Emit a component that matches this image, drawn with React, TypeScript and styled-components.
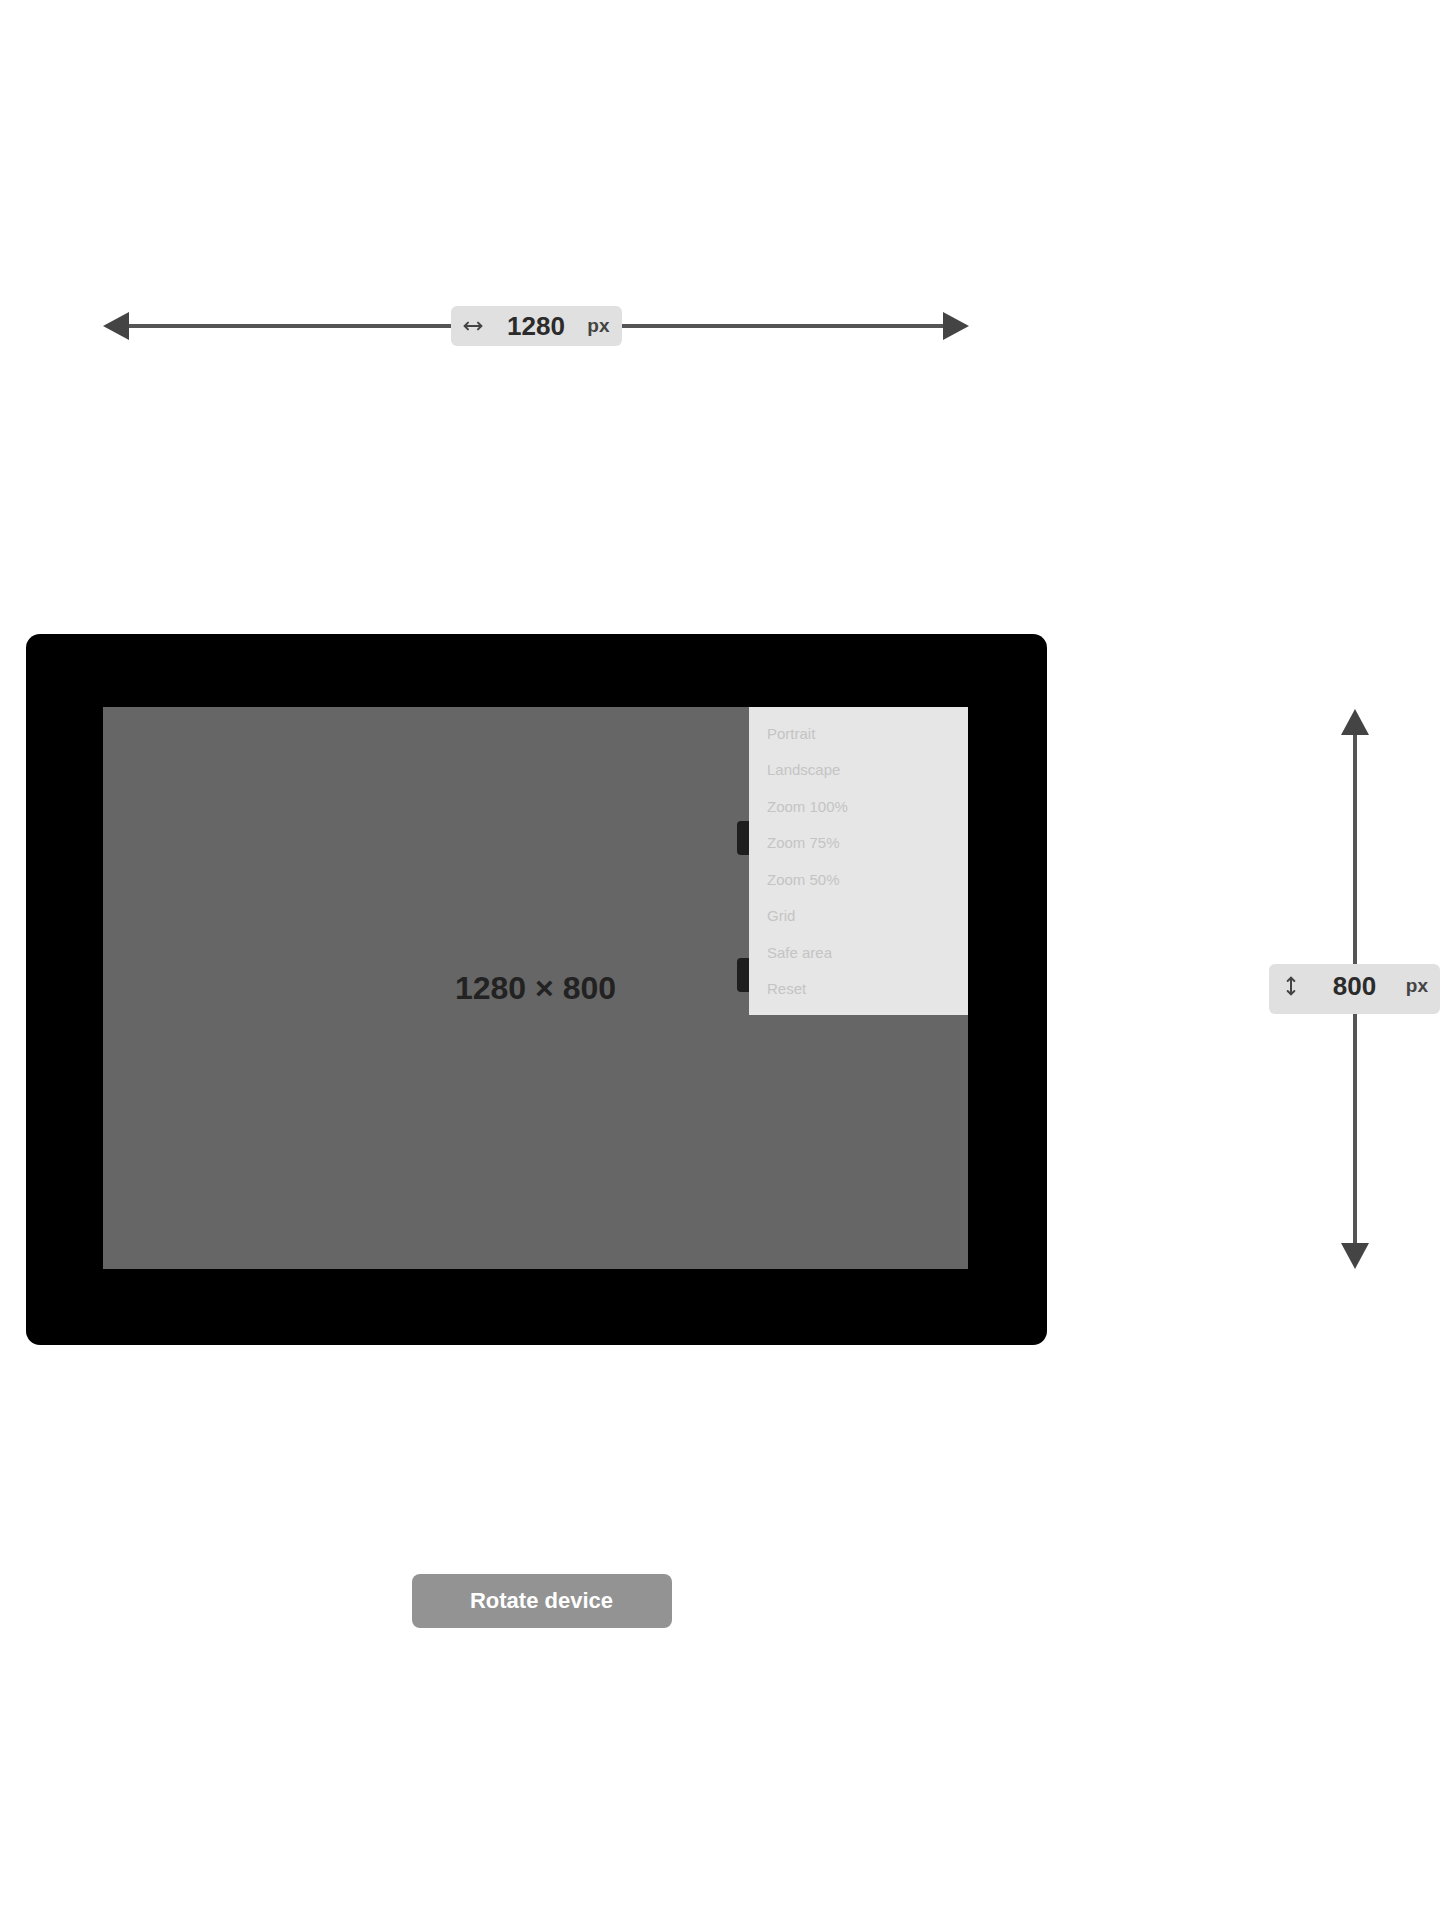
import { FC } from 'react'
import styled, { createGlobalStyle, css } from 'styled-components'
import { MoveHorizontal, MoveVertical } from 'lucide-react'

/**
 * Global
 */

const GlobalStyle = createGlobalStyle`
  html, body {
    margin: 0;
    padding: 0;
    background: #ffffff;
  }
  body {
    font-family: 'Liberation Sans', Arial, sans-serif;
  }
`

/**
 * Data
 */

const panelItems = ['Portrait', 'Landscape', 'Zoom 100%', 'Zoom 75%', 'Zoom 50%', 'Grid', 'Safe area', 'Reset']

const arrowPaths = {
  left: 'M0 14 L26 0 L26 28 Z',
  right: 'M26 14 L0 0 L0 28 Z',
  up: 'M14 0 L0 26 L28 26 Z',
  down: 'M14 26 L0 0 L28 0 Z'
}

type Direction = keyof typeof arrowPaths

/**
 * Parts
 */

const Arrowhead: FC<{ direction: Direction }> = ({ direction }) => {
  const flat = direction === 'left' || direction === 'right'
  const width = flat ? 26 : 28
  const height = flat ? 28 : 26
  return (
    <StyledArrow width={width} height={height} viewBox={`0 0 ${width} ${height}`}>
      <path d={arrowPaths[direction]} fill="#444444" />
    </StyledArrow>
  )
}

interface RulerProps {
  value: number
  vertical?: boolean
}

const Ruler: FC<RulerProps> = ({ value, vertical = false }) => {
  const Icon = vertical ? MoveVertical : MoveHorizontal
  return (
    <StyledRuler $vertical={vertical}>
      <Arrowhead direction={vertical ? 'up' : 'left'} />
      <RulerLine $vertical={vertical} />
      <RulerLabel $vertical={vertical}>
        <Icon size={20} strokeWidth={2.4} color="#444444" />
        <RulerValue>{value}</RulerValue>
        <RulerUnit>px</RulerUnit>
      </RulerLabel>
      <RulerLine $vertical={vertical} />
      <Arrowhead direction={vertical ? 'down' : 'right'} />
    </StyledRuler>
  )
}

/**
 * Page
 */

export default function App() {
  return (
    <>
      <GlobalStyle />
      <StyledPage>
        <StyledMain>
          <Ruler value={1280} />
          <StyledDevice>
            <StyledScreen>
              <StyledViewportText>1280 × 800</StyledViewportText>
              <StyledPanel>
                <StyledHandle $top={114} />
                <StyledHandle $top={251} />
                {panelItems.map(item => (
                  <StyledPanelItem key={item}>{item}</StyledPanelItem>
                ))}
              </StyledPanel>
            </StyledScreen>
          </StyledDevice>
          <StyledActions>
            <StyledButton type="button">Rotate device</StyledButton>
          </StyledActions>
        </StyledMain>
        <StyledSide>
          <Ruler value={800} vertical />
        </StyledSide>
      </StyledPage>
    </>
  )
}

/**
 * Styled Component
 */

const StyledPage = styled.div`
  display: flex;
  width: 1440px;
  min-height: 1920px;
`

const StyledMain = styled.main`
  display: flex;
  flex-direction: column;
  width: 1073px;
  padding-top: 306px;
`

const StyledSide = styled.aside`
  display: flex;
  margin-left: 196px;
  padding-top: 709px;
  width: 171px;
`

const StyledRuler = styled.div<{ $vertical: boolean }>`
  display: flex;
  align-items: center;
  ${({ $vertical }) =>
    $vertical
      ? css`
          flex-direction: column;
          width: 171px;
          height: 560px;
        `
      : css`
          flex-direction: row;
          width: 866px;
          height: 40px;
          margin-left: 103px;
        `}
`

const StyledArrow = styled.svg`
  display: block;
  flex: none;
`

const RulerLine = styled.div<{ $vertical: boolean }>`
  flex: 1;
  background: #555555;
  ${({ $vertical }) =>
    $vertical
      ? css`
          width: 4px;
        `
      : css`
          height: 4px;
        `}
`

const RulerLabel = styled.span<{ $vertical: boolean }>`
  display: grid;
  grid-template-columns: 1fr auto 1fr;
  align-items: center;
  flex: none;
  box-sizing: border-box;
  width: 171px;
  height: ${({ $vertical }) => ($vertical ? '50px' : '40px')};
  padding: ${({ $vertical }) => ($vertical ? '0 12px 6px' : '0 12px')};
  border-radius: 6px;
  background: #e0e0e0;
  color: #2b2b2b;

  & > svg {
    justify-self: start;
  }
`

const RulerValue = styled.span`
  font-size: 26px;
  font-weight: bold;
`

const RulerUnit = styled.span`
  justify-self: end;
  color: #444444;
  font-size: 19px;
  font-weight: bold;
`

const StyledDevice = styled.div`
  display: flex;
  box-sizing: border-box;
  width: 1021px;
  height: 711px;
  margin: 288px 0 0 26px;
  padding: 73px 79px 76px 77px;
  border-radius: 14px;
  background: #000000;
`

const StyledScreen = styled.div`
  position: relative;
  display: flex;
  align-items: center;
  justify-content: center;
  width: 866px;
  height: 562px;
  background: #666666;
`

const StyledViewportText = styled.span`
  color: #222222;
  font-size: 32px;
  font-weight: bold;
`

const StyledPanel = styled.nav`
  position: absolute;
  top: 0;
  right: 0;
  box-sizing: border-box;
  display: flex;
  flex-direction: column;
  width: 219px;
  height: 308px;
  padding: 8px 0;
  background: #e6e6e6;
`

const StyledHandle = styled.span<{ $top: number }>`
  position: absolute;
  left: -12px;
  top: ${({ $top }) => $top}px;
  width: 12px;
  height: 34px;
  border-radius: 4px 0 0 4px;
  background: #1e1e1e;
`

const StyledPanelItem = styled.div`
  display: flex;
  align-items: center;
  flex: 1;
  padding: 0 18px;
  color: #c4c4c4;
  font-size: 15px;
`

const StyledActions = styled.div`
  display: flex;
  justify-content: center;
  padding-left: 10px;
  margin-top: 229px;
`

const StyledButton = styled.button`
  width: 260px;
  height: 54px;
  border: none;
  border-radius: 8px;
  background: #939393;
  color: #ffffff;
  font-family: 'Liberation Sans', Arial, sans-serif;
  font-size: 22px;
  font-weight: bold;
`
